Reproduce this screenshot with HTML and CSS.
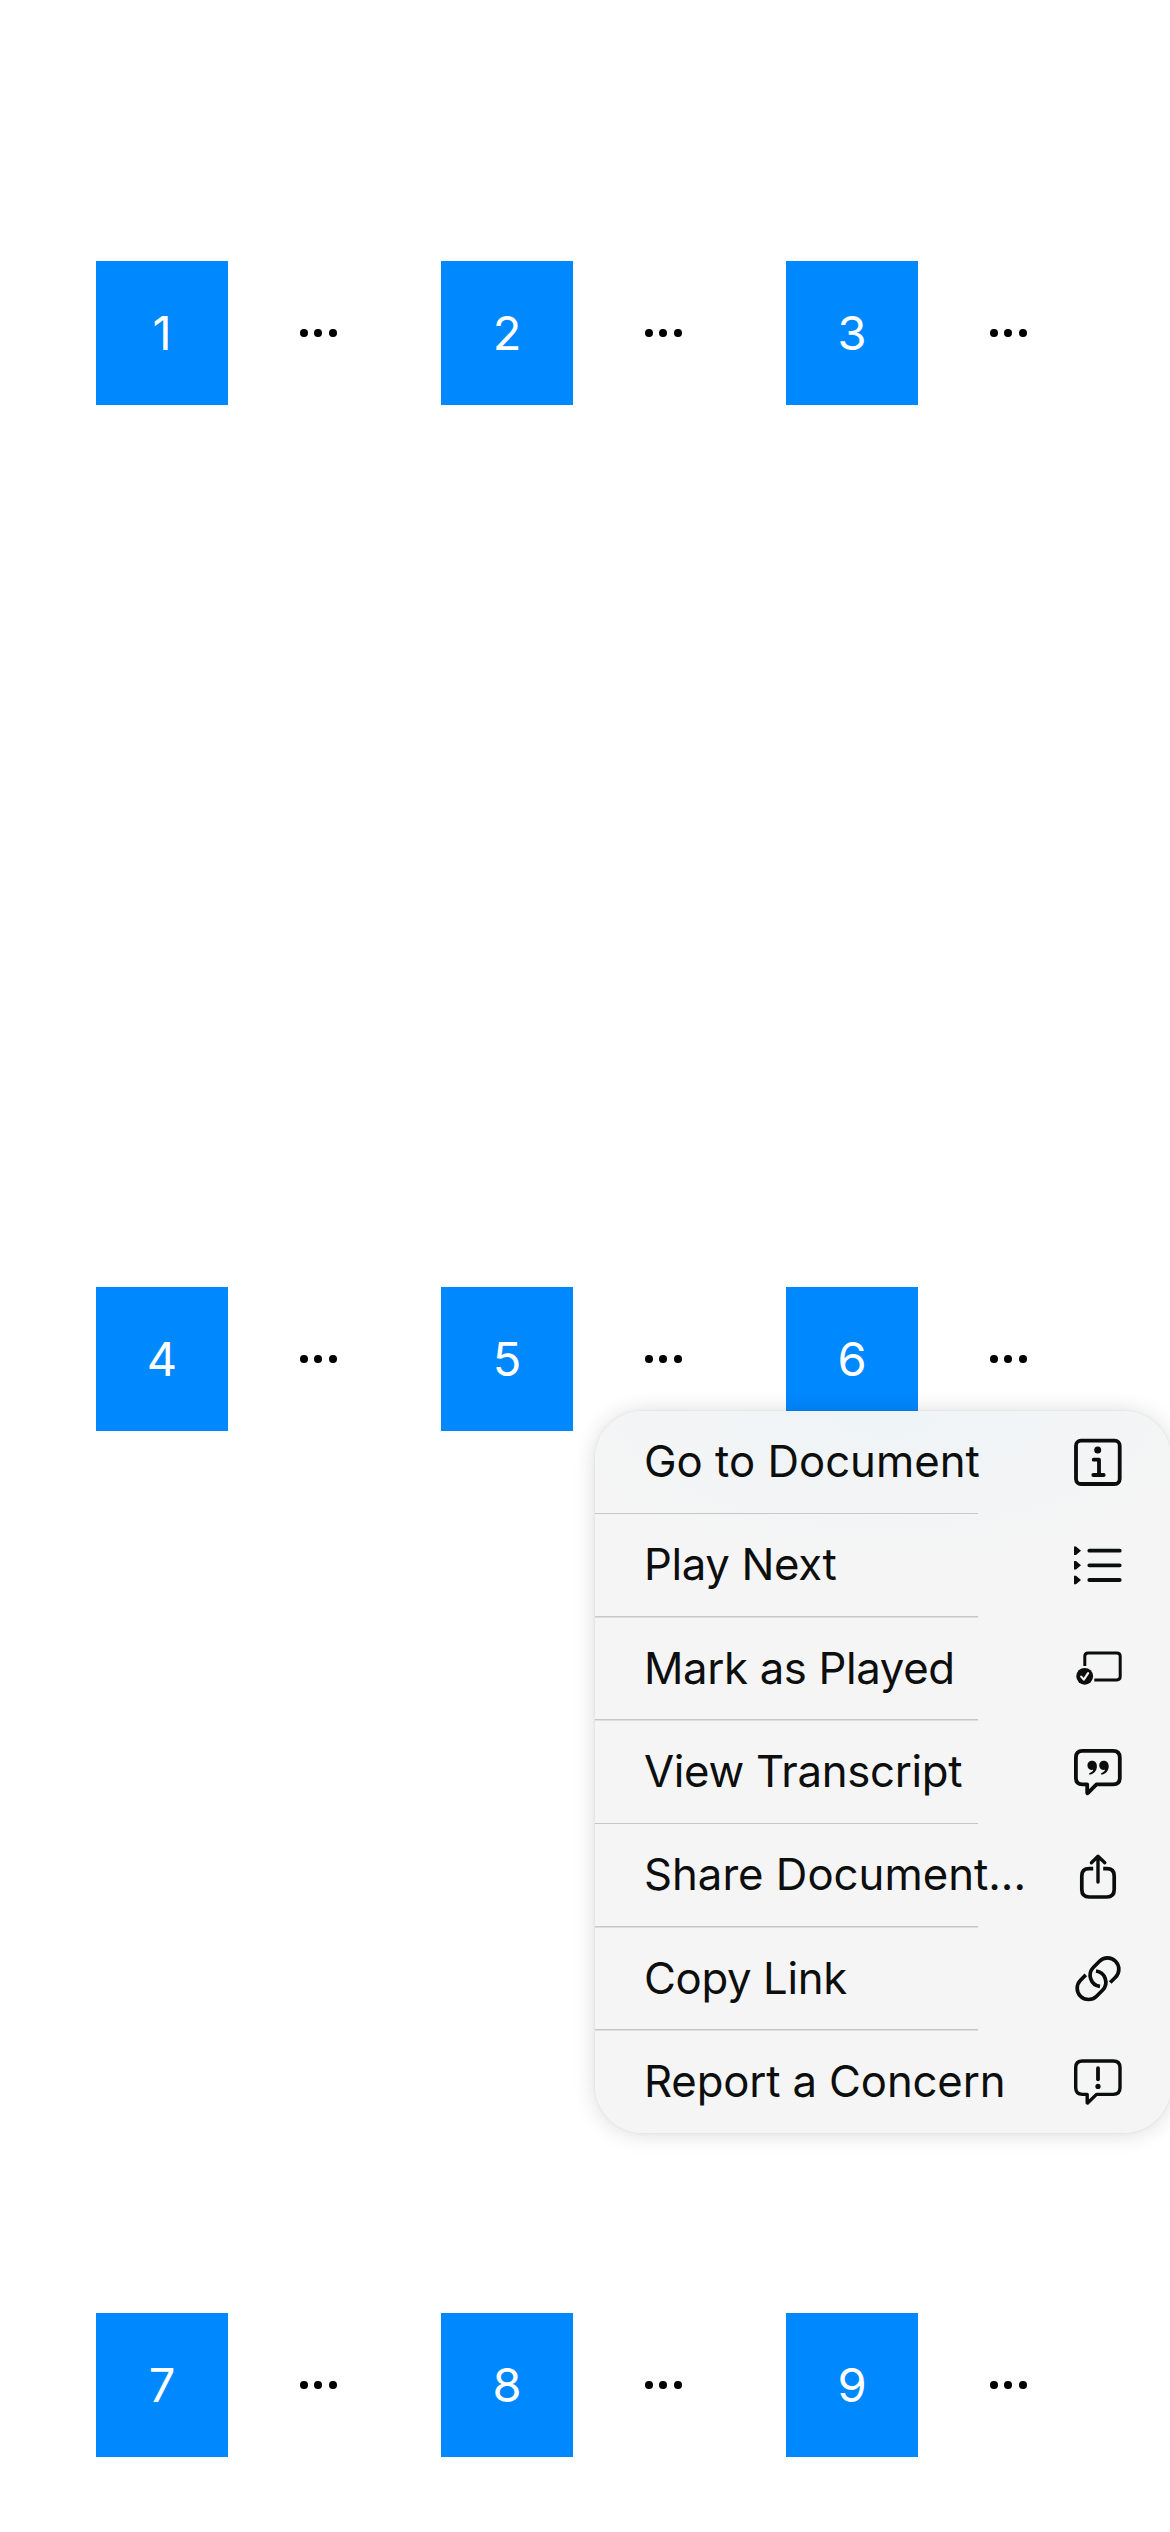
FILE: index.html
```
<!DOCTYPE html>
<html lang="en">
<head>
<meta charset="utf-8">
<title>Documents</title>
<link rel="stylesheet" href="styles.css">
</head>
<body>
<main class="grid">
  <div class="cell"><div class="tile">1</div><div class="more"><i></i><i></i><i></i></div></div>
  <div class="cell"><div class="tile">2</div><div class="more"><i></i><i></i><i></i></div></div>
  <div class="cell"><div class="tile">3</div><div class="more"><i></i><i></i><i></i></div></div>
  <div class="cell"><div class="tile">4</div><div class="more"><i></i><i></i><i></i></div></div>
  <div class="cell"><div class="tile">5</div><div class="more"><i></i><i></i><i></i></div></div>
  <div class="cell"><div class="tile">6</div><div class="more"><i></i><i></i><i></i></div></div>
  <div class="cell"><div class="tile">7</div><div class="more"><i></i><i></i><i></i></div></div>
  <div class="cell"><div class="tile">8</div><div class="more"><i></i><i></i><i></i></div></div>
  <div class="cell"><div class="tile">9</div><div class="more"><i></i><i></i><i></i></div></div>
</main>
<nav class="menu">
  <div class="item"><span class="label">Go to Document</span>
    <svg class="icon" viewBox="0 0 60 60"><rect x="8" y="8.7" width="43.7" height="43.3" rx="5"/><circle class="solid" cx="29.7" cy="18" r="3.5"/><path d="M25.7 27.7H31V43M25.3 43H35.7"/></svg></div>
  <div class="item"><span class="label play">Play Next</span>
    <svg class="icon" viewBox="0 0 60 60"><path d="M21.3 15.7H51.7M21.3 30.3H51.7M21.3 45H51.7"/><path class="solid" d="M6 11.5L8 11.4 13 15.7 8 20 6 19.9ZM6 26.1L8 26 13 30.3 8 34.6 6 34.5ZM6 40.8L8 40.7 13 45 8 49.3 6 49.2Z"/></svg></div>
  <div class="item"><span class="label mark">Mark as Played</span>
    <svg class="icon" viewBox="0 0 60 60"><path class="thin" d="M16.8 27V17.2Q16.8 13.9 20.1 13.9H48.9Q52.2 13.9 52.2 17.2V37.6Q52.2 40.9 48.9 40.9H26.3"/><circle class="solid" cx="16.7" cy="37.3" r="8.4"/><path class="check" d="M13.2 37.6L15.8 40.6 20.1 34.2"/></svg></div>
  <div class="item"><span class="label view">View Transcript</span>
    <svg class="icon" viewBox="0 0 60 60"><path d="M14.5 8.9H45.2Q51.8 8.9 51.8 15.5V35.8Q51.8 42.4 45.2 42.4H28.5L19.8 51.1Q19.2 51.6 19.2 50.6V42.4H14.5Q7.9 42.4 7.9 35.8V15.5Q7.9 8.9 14.5 8.9Z"/><path class="solid" d="M24 18.8C27 18.8 28.9 21 28.9 24.2C28.9 28.4 26.2 31.8 22.2 32.6C21 32.8 20.6 31.5 21.8 31C23.8 30.2 25 29 25.3 27.8C22 28.5 19.4 26.4 19.4 23.4C19.4 20.8 21.4 18.8 24 18.8ZM35.8 18.8C38.8 18.8 40.7 21 40.7 24.2C40.7 28.4 38 31.8 34 32.6C32.8 32.8 32.4 31.5 33.6 31C35.6 30.2 36.8 29 37.1 27.8C33.8 28.5 31.2 26.4 31.2 23.4C31.2 20.8 33.2 18.8 35.8 18.8Z"/></svg></div>
  <div class="item"><span class="label">Share Document...</span>
    <svg class="icon" viewBox="0 0 60 60"><path class="butt" d="M25.2 23.7H21.2Q13.8 23.7 13.8 31V44.6Q13.8 52 21.2 52H38.8Q46.2 52 46.2 44.6V31Q46.2 23.7 38.8 23.7H35.2"/><path class="arrow" d="M30 11.5V37M23.4 17.7L30 11.3L36.8 17.7"/></svg></div>
  <div class="item"><span class="label copy">Copy Link</span>
    <svg class="icon" viewBox="0 0 60 60"><path class="butt" d="M32 37.4A11.3 11.3 0 0 1 25.5 18.2L31.5 12.2A11.3 11.3 0 0 1 47.5 28.2L42.2 33.5"/><path class="butt" transform="rotate(180 30 29.7)" d="M32 37.4A11.3 11.3 0 0 1 25.5 18.2L31.5 12.2A11.3 11.3 0 0 1 47.5 28.2L42.2 33.5"/></svg></div>
  <div class="item"><span class="label report">Report a Concern</span>
    <svg class="icon" viewBox="0 0 60 60"><path class="bubble" d="M14.5 9H45.2Q52 9 52 15.6V35.8Q52 42.4 45.2 42.4H28.5L19.8 50.9Q19.2 51.4 19.2 50.4V42.4H14.5Q7.7 42.4 7.7 35.8V15.6Q7.7 9 14.5 9Z"/><path d="M30 16.2V27.3"/><circle class="solid" cx="30" cy="34.4" r="2.6"/></svg></div>
</nav>
</body>
</html>
```
FILE: styles.css
```
* { box-sizing: border-box; }
body {
  margin: 0;
  height: 2532px;
  position: relative;
  overflow: hidden;
  background: #fff;
  font-family: Inter, "Liberation Sans", sans-serif;
}
.grid {
  display: grid;
  grid-template-columns: repeat(3, 345px);
  grid-auto-rows: 144px;
  row-gap: 882px;
  padding: 261px 0 0 96px;
}
.cell { display: flex; align-items: center; gap: 72px; }
.tile {
  width: 132px;
  height: 144px;
  display: flex;
  align-items: center;
  justify-content: center;
  padding-bottom: 2px;
  background: #0088ff;
  color: #fff;
  font-size: 47px;
}
.more { display: flex; gap: 6.3px; }
.more i { width: 8px; height: 8.6px; border-radius: 50%; background: #000; }
.menu {
  position: absolute;
  left: 595px;
  top: 1411px;
  width: 576px;
  height: 722px;
  display: flex;
  flex-direction: column;
  border-radius: 48px;
  background: radial-gradient(ellipse 340px 150px at 290px 0, #eff4f6 10%, #f5f5f5 100%);
  box-shadow: 0 1px 22px rgba(0, 0, 0, .15), 0 0 3px rgba(0, 0, 0, .08);
}
.item {
  height: 103.33px;
  display: flex;
  align-items: center;
  justify-content: space-between;
  padding: 0 43px 1.33px 49px;
  background: linear-gradient(#c6c7c7, #c6c7c7) left bottom / 383px 1.5px no-repeat;
}
.item:last-child {
  height: 102px;
  padding-bottom: 0;
  background: none;
}
.label {
  font-size: 43.7px;
  line-height: 60px;
  white-space: nowrap;
  color: #0d0e0e;
}
.play { letter-spacing: -.35px; }
.mark { letter-spacing: -.35px; }
.view { letter-spacing: -.3px; }
.copy { letter-spacing: -.35px; }
.report { letter-spacing: -.15px; }
.icon {
  width: 60px;
  height: 60px;
  flex: none;
  fill: none;
  stroke: #0b0c0c;
  stroke-width: 3.8;
  stroke-linecap: round;
  stroke-linejoin: round;
}
.icon .solid { fill: #0b0c0c; stroke: none; }
.icon .thin { stroke-width: 3; stroke-linecap: butt; }
.icon .check { stroke: #f5f5f5; stroke-width: 2.2; }
.icon .butt { stroke-linecap: butt; stroke-width: 3.7; }
.icon .arrow { stroke-width: 3.4; }
.icon .bubble { stroke-width: 3.4; }
```
